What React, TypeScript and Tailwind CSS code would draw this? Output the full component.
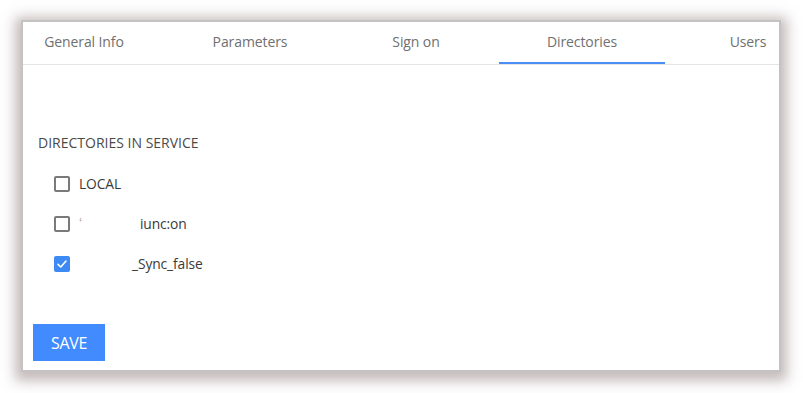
import { useState } from 'react';

const tabs = ['General Info', 'Parameters', 'Sign on', 'Directories', 'Users'];

type TDirectory = {
  id: string;
  lead: string;
  gap: number;
  rest: string;
  checked: boolean;
};

const directories: TDirectory[] = [
  { id: 'local', lead: 'LOCAL', gap: 0, rest: '', checked: false },
  { id: 'sync-on', lead: '\u02BB', gap: 58, rest: 'iunc:on', checked: false },
  { id: 'sync-false', lead: '', gap: 53, rest: '_Sync_false', checked: true },
];

const App = () => {
  const [activeTab, setActiveTab] = useState('Directories');
  const [selected, setSelected] = useState<Record<string, boolean>>(
    Object.fromEntries(directories.map((d) => [d.id, d.checked]))
  );

  return (
    <div className="w-[803px] h-[393px] bg-white pt-[20px] pl-[21px] font-['Open_Sans',sans-serif]">
      <div className="w-[760px] h-[352px] bg-white border-2 border-[#c4c2c2] overflow-hidden shadow-[0_3px_12px_6px_rgba(140,120,120,0.5)]">
        {/* tabs strip is scrolled, first and last tab cut off */}
        <div className="border-b border-[#e4e4e4]">
          <div className="flex ml-[-22px]">
            {tabs.map((tab) => (
              <button
                key={tab}
                onClick={() => setActiveTab(tab)}
                className={`shrink-0 w-[166px] h-[42px] pb-[1px] flex items-center justify-center text-[14px] tracking-[-0.1px] text-[#707070] border-b-2 ${
                  activeTab === tab ? 'border-[#4a8df6]' : 'border-transparent'
                }`}
              >
                {tab}
              </button>
            ))}
          </div>
        </div>

        <div className="pl-[10px] pt-[70px]">
          <div className="pl-[5px] text-[14px] leading-[16px] tracking-[0px] text-[#4a4a4a]">
            DIRECTORIES IN SERVICE
          </div>
          <div className="mt-[13px] pl-[21px]">
            {directories.map((d) => (
              <label key={d.id} className="h-[40px] flex items-center gap-[9px] cursor-pointer">
                <span
                  onClick={() => setSelected({ ...selected, [d.id]: !selected[d.id] })}
                  className={`w-[16px] h-[16px] rounded-[2px] flex items-center justify-center ${
                    selected[d.id] ? 'bg-[#3d8af5]' : 'border-2 border-[#7a7a7a] bg-white'
                  }`}
                >
                  {selected[d.id] && (
                    <svg width="12" height="12" viewBox="0 0 12 12" fill="none">
                      <path d="M2 6.3 L4.8 9 L10 3" stroke="white" strokeWidth="1.6" strokeLinecap="round" strokeLinejoin="round" />
                    </svg>
                  )}
                </span>
                <span className="flex items-center text-[13.8px] tracking-[-0.1px] text-[#3a3a3a]">
                  {d.lead && <span className={d.gap ? 'text-[#b0a0a0]' : ''}>{d.lead}</span>}
                  {d.gap > 0 && <span className="inline-block h-[16px] bg-white" style={{ width: d.gap }} />}
                  {d.rest && <span>{d.rest}</span>}
                </span>
              </label>
            ))}
          </div>
          <button className="mt-[40px] w-[72px] h-[37px] bg-[#428bff] text-white text-[16px] tracking-[-0.3px]">
            SAVE
          </button>
        </div>
      </div>
    </div>
  );
};

export default App;
